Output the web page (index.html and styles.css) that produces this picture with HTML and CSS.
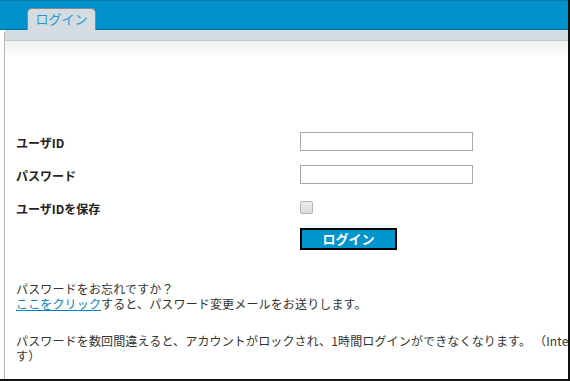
FILE: index.html
```html
<!DOCTYPE html>
<html lang="ja">
<head>
    <meta charset="UTF-8">
    <meta name="viewport" content="width=device-width, initial-scale=1.0">
    <title>ログイン</title>
    <link rel="stylesheet" href="styles.css">
</head>
<body>

<div class="frame">
    <div class="topbar">
        <div class="tab">ログイン</div>
    </div>
    <div class="panel">
        <form class="login-form" onsubmit="return false;">
            <label class="field-label" for="userid">ユーザID</label>
            <div class="field"><input class="text-input" type="text" id="userid"></div>

            <label class="field-label" for="password">パスワード</label>
            <div class="field"><input class="text-input" type="password" id="password"></div>

            <label class="field-label" for="remember">ユーザIDを保存</label>
            <div class="field"><input class="check" type="checkbox" id="remember"></div>

            <div></div>
            <div class="field field-top"><button class="login-btn" type="submit">ログイン</button></div>
        </form>

        <p class="note">
            パスワードをお忘れですか？<br>
            <a class="link" href="#">ここをクリック</a>すると、パスワード変更メールをお送りします。
        </p>
        <p class="note note-warn">
            <span class="nowrap">パスワードを数回間違えると、アカウントがロックされ、1時間ログインができなくなります。 （Internet Explorerをご利用の方はご注意くださいま</span><br>
            す）
        </p>
    </div>
</div>

</body>
</html>
```

FILE: styles.css
```css
body {
    margin: 0;
    font-family: "Noto Sans CJK JP", "Liberation Sans", sans-serif;
    font-size: 12px;
    color: #333;
    background: #fff;
}
.frame {
    width: 570px;
    height: 381px;
    box-sizing: border-box;
    border-right: 2px solid #111;
    border-bottom: 2px solid #111;
    overflow: hidden;
    background: #fff;
}
.topbar {
    height: 30px;
    box-sizing: border-box;
    background: #0092cb;
    border-top: 1px solid #0b7aab;
    border-bottom: 1px solid #0a6f98;
    padding-left: 27px;
    display: flex;
    align-items: flex-end;
}
.tab {
    width: 69px;
    height: 22px;
    margin-bottom: -1px;
    box-sizing: border-box;
    background: #d4dce2;
    border: 1px solid #7f8a90;
    border-bottom: none;
    border-radius: 5px 5px 0 0;
    color: #2a95d6;
    font-size: 13px;
    line-height: 20px;
    text-align: center;
}
.panel {
    margin-left: 4px;
    height: 351px;
    box-sizing: border-box;
    border-left: 1px solid #b5b5b5;
    border-top-left-radius: 4px;
    background: linear-gradient(#d5dce2 0, #d5dce2 10px, #c3c7c9 10px, #c3c7c9 11px, #eef2f2 11px, #fff 28px);
    padding: 96px 0 0 11px;
}
.login-form {
    display: grid;
    grid-template-columns: 284px 200px;
    grid-auto-rows: 33px;
    align-items: center;
}
.field-label {
    font-weight: bold;
    color: #222;
}
.field {
    display: flex;
    align-items: center;
}
.field-top {
    align-self: start;
    padding-top: 3px;
}
.text-input {
    width: 173px;
    height: 19px;
    box-sizing: border-box;
    margin: -2px 0 0 0;
    border: 1px solid #a9a9a9;
    border-radius: 0;
    padding: 1px 3px;
    font-family: inherit;
    font-size: 12px;
}
.check {
    appearance: none;
    width: 13px;
    height: 13px;
    margin: -3px 0 0 0;
    box-sizing: border-box;
    border: 1px solid #b4b4b4;
    border-radius: 2px;
    background: linear-gradient(#ededed, #dcdcdc);
}
.login-btn {
    width: 97px;
    height: 22px;
    box-sizing: border-box;
    border: 2px solid #000;
    background: #0095cd;
    color: #fff;
    font-family: inherit;
    font-size: 13px;
    font-weight: bold;
    line-height: 16px;
    padding: 0;
}
.note {
    margin: 23px 0 0 0;
    line-height: 15px;
    letter-spacing: 0.15px;
}
.note-warn {
    margin-top: 22px;
}
.link {
    color: #0a7fc2;
    text-decoration: underline;
}
.nowrap {
    white-space: nowrap;
}
```
